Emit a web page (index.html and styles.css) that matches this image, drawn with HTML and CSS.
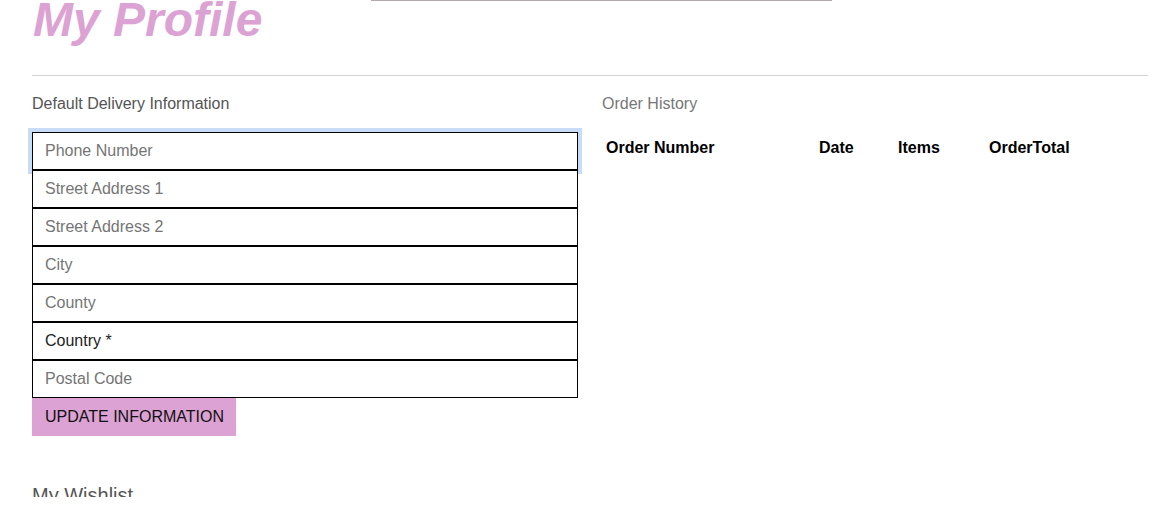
FILE: index.html
```html
<!DOCTYPE html>
<html lang="en">
<head>
<meta charset="utf-8">
<title>My Profile</title>
<link rel="stylesheet" href="styles.css">
</head>
<body>
<div class="page">
  <div class="topbar"></div>
  <h1 class="title">My Profile</h1>
  <hr class="rule">
  <div class="columns">
    <section class="delivery">
      <h2 class="section-label">Default Delivery Information</h2>
      <form class="form">
        <input class="field field-focus" type="text" placeholder="Phone Number">
        <input class="field" type="text" placeholder="Street Address 1">
        <input class="field" type="text" placeholder="Street Address 2">
        <input class="field" type="text" placeholder="City">
        <input class="field" type="text" placeholder="County">
        <div class="field field-select">Country *</div>
        <input class="field" type="text" placeholder="Postal Code">
        <button class="btn" type="button">UPDATE INFORMATION</button>
      </form>
      <h2 class="wishlist">My Wishlist</h2>
    </section>
    <section class="orders">
      <h2 class="section-label light">Order History</h2>
      <table class="order-table">
        <thead>
          <tr>
            <th class="c1">Order Number</th>
            <th class="c2">Date</th>
            <th class="c3">Items</th>
            <th class="c4">OrderTotal</th>
          </tr>
        </thead>
      </table>
    </section>
  </div>
</div>
</body>
</html>
```
FILE: styles.css
```css
* { box-sizing: border-box; }
html, body { margin: 0; padding: 0; background: #fff; }
body { font-family: "Liberation Sans", Arial, sans-serif; color: #000; }

.page {
  height: 497px;
  overflow: hidden;
  padding: 0 17px 0 32px;
}
.topbar {
  width: 461px;
  height: 1px;
  margin-left: 339px;
  background: #b2aaaa;
}
.title {
  margin: -5px 0 0 1px;
  font-size: 48px;
  line-height: 48px;
  font-style: italic;
  font-weight: bold;
  color: #dca2d4;
}
.rule {
  margin: 31px 0 0 0;
  border: 0;
  border-top: 1px solid #d3d3d3;
  height: 0;
}
.columns {
  display: grid;
  grid-template-columns: 546px 1fr;
  column-gap: 24px;
}
.section-label {
  margin: 19px 0 0 0;
  font-size: 16px;
  line-height: 18px;
  font-weight: normal;
  color: #555;
}
.section-label.light { color: #777; }

.form {
  display: flex;
  flex-direction: column;
  align-items: flex-start;
  margin-top: 19px;
}
.field {
  display: block;
  width: 546px;
  height: 38px;
  margin: 0;
  padding: 0 12px;
  border: 1px solid #000;
  border-radius: 0;
  background: #fff;
  font-family: "Liberation Sans", Arial, sans-serif;
  font-size: 16px;
  line-height: 36px;
  color: #333;
  outline: none;
  position: relative;
}
.field::placeholder { color: #757575; opacity: 1; }
.field-focus {
  box-shadow: 0 0 0 4px #c8dcf7;
  z-index: 0;
}
.field + .field { z-index: 1; }
.field-select { color: #222; }

.btn {
  height: 38px;
  padding: 0 12px 0 13px;
  border: 0;
  border-radius: 0;
  background: #dca2d4;
  font-family: "Liberation Sans", Arial, sans-serif;
  font-size: 16px;
  color: #111;
  cursor: pointer;
}
.wishlist {
  margin: 48px 0 0 0;
  font-size: 20px;
  line-height: 23px;
  font-weight: normal;
  color: #555;
}

.order-table {
  margin-top: 21px;
  border-collapse: collapse;
  table-layout: fixed;
  width: 480px;
}
.order-table th {
  padding: 5px 4px;
  font-size: 16px;
  line-height: 18px;
  font-weight: bold;
  text-align: left;
  color: #000;
}
.c1 { width: 213px; }
.c2 { width: 79px; }
.c3 { width: 91px; }
.c4 { width: 97px; }
```
